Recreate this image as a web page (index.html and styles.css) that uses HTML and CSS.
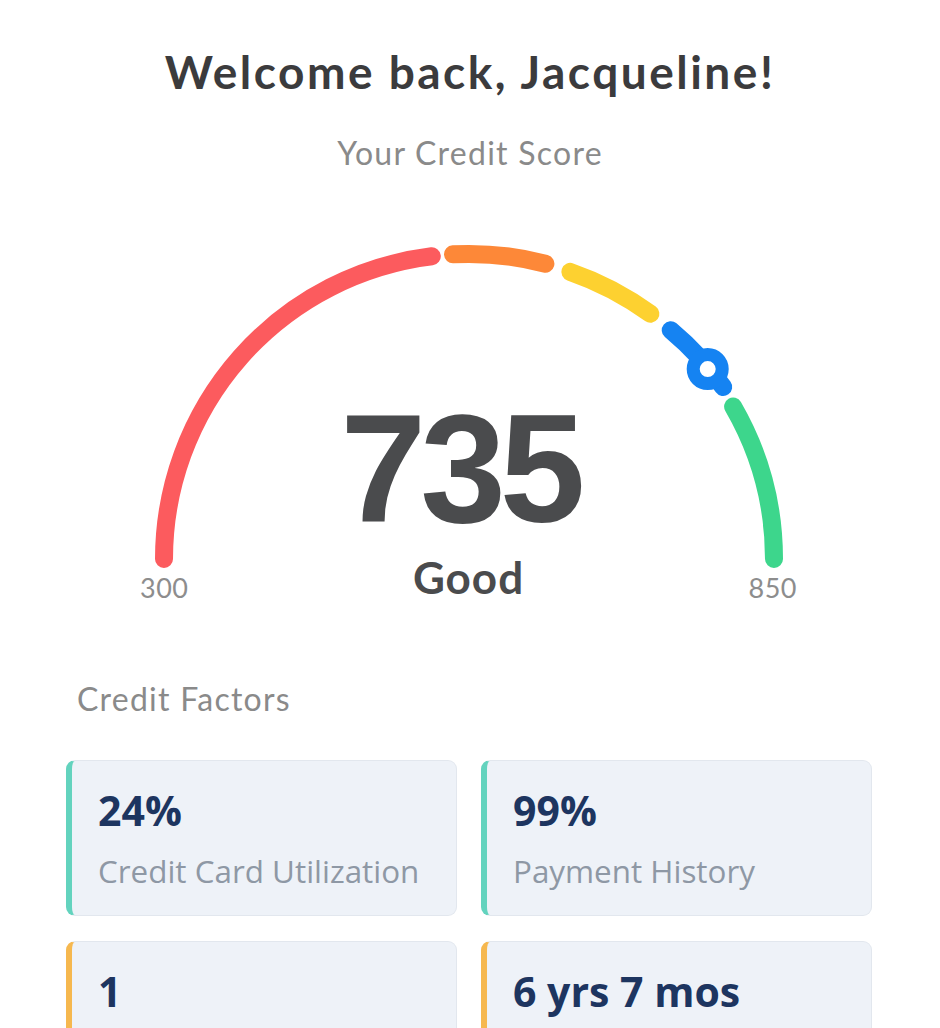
FILE: index.html
```html
<!DOCTYPE html>
<html lang="en">
<head>
<meta charset="utf-8">
<title>Credit Score</title>
<link rel="stylesheet" href="styles.css">
</head>
<body>
<main class="page">
  <h1 class="welcome">Welcome back, Jacqueline!</h1>
  <p class="subtitle">Your Credit Score</p>

  <section class="gauge">
    <div class="dial">
      <svg class="arc" viewBox="0 0 700 342" width="700" height="342" aria-hidden="true">
        <g fill="none" stroke-width="18" stroke-linecap="round">
          <path d="M44 337 A305 305 0 0 1 311.8 34.3" stroke="#fc5b5e"/>
          <path d="M333.0 32.3 A305 305 0 0 1 425.4 41.7" stroke="#fd8838"/>
          <path d="M450.3 49.9 A305 305 0 0 1 530.4 91.8" stroke="#fdd130"/>
          <path d="M550.7 108.2 A305 305 0 0 1 603.2 165.0" stroke="#1583f2"/>
          <path d="M613.1 184.5 A305 305 0 0 1 654 337" stroke="#3dd68c"/>
        </g>
        <circle cx="587.7" cy="147.1" r="14.5" fill="#fff" stroke="#1583f2" stroke-width="13"/>
      </svg>
      <div class="score">735</div>
    </div>
    <div class="scale">
      <span class="bound">300</span>
      <span class="rating">Good</span>
      <span class="bound">850</span>
    </div>
  </section>

  <section class="factors">
    <h2 class="factors-title">Credit Factors</h2>
    <div class="factor-grid">
      <div class="factor factor-good">
        <div class="factor-value">24%</div>
        <div class="factor-label">Credit Card Utilization</div>
      </div>
      <div class="factor factor-good">
        <div class="factor-value">99%</div>
        <div class="factor-label">Payment History</div>
      </div>
      <div class="factor factor-fair">
        <div class="factor-value">1</div>
        <div class="factor-label">Derogatory Marks</div>
      </div>
      <div class="factor factor-fair">
        <div class="factor-value">6 yrs 7 mos</div>
        <div class="factor-label">Credit Age</div>
      </div>
    </div>
  </section>
</main>
</body>
</html>
```

FILE: styles.css
```css
* { box-sizing: border-box; }

html, body {
  margin: 0;
  padding: 0;
  background: #ffffff;
}

body {
  font-family: "Lato", "Noto Sans", sans-serif;
  overflow: hidden;
}

.page {
  width: 940px;
  padding-top: 45px;
}

.welcome {
  margin: 0;
  text-align: center;
  font-family: "Lato", sans-serif;
  font-weight: 700;
  font-size: 46px;
  line-height: 54px;
  color: #3b3b3d;
  letter-spacing: 2.5px;
}

.subtitle {
  margin: 36px 0 0;
  text-align: center;
  font-size: 32px;
  line-height: 36px;
  color: #8a8a8a;
  letter-spacing: 1.25px;
}

.gauge {
  width: 700px;
  margin: 51px auto 0;
}

.dial {
  display: grid;
}

.dial > * {
  grid-area: 1 / 1;
}

.arc {
  display: block;
  overflow: visible;
}

.score {
  align-self: start;
  justify-self: center;
  margin-top: 170px;
  margin-left: -20px;
  font-family: "Liberation Sans", Arial, sans-serif;
  font-weight: 700;
  font-size: 154px;
  line-height: 154px;
  color: #4a4b4d;
  letter-spacing: -6px;
}

.scale {
  display: flex;
  justify-content: space-between;
  align-items: flex-end;
  padding: 0 23px 0 20px;
  margin-top: -9px;
}

.bound {
  font-size: 27px;
  line-height: 30px;
  color: #8d8d8d;
  margin-bottom: -4px;
  letter-spacing: 0.5px;
}

.rating {
  font-weight: 700;
  font-size: 44px;
  line-height: 44px;
  color: #4a4b4d;
  letter-spacing: 1px;
}

.factors {
  padding: 0 68px 0 66px;
  margin-top: 82px;
}

.factors-title {
  margin: 0 0 0 11px;
  font-weight: 400;
  font-size: 32px;
  line-height: 36px;
  color: #8a8a8a;
  letter-spacing: 1.25px;
}

.factor-grid {
  display: grid;
  grid-template-columns: 1fr 1fr;
  gap: 25px 24px;
  margin-top: 43px;
}

.factor {
  height: 156px;
  padding: 24px 20px 0 26px;
  background: #eef2f8;
  border: 1px solid #e2e7ee;
  border-left: 6px solid #63d3be;
  border-radius: 9px;
  font-family: "Open Sans", sans-serif;
}

.factor-fair {
  border-left-color: #f6b84f;
}

.factor-value {
  font-weight: 700;
  font-size: 41px;
  line-height: 50px;
  color: #1d3560;
}

.factor-label {
  margin-top: 16px;
  font-size: 31.4px;
  line-height: 40px;
  color: #8e98a5;
}
```
